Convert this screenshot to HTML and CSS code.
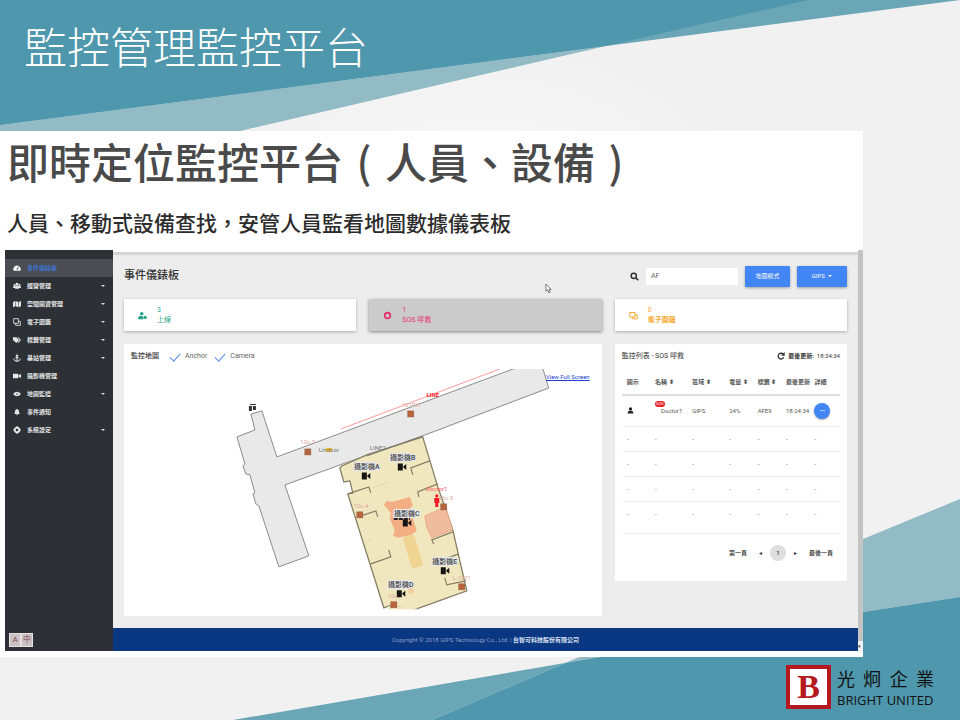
FILE: index.html
```html
<!DOCTYPE html>
<html lang="zh-Hant">
<head>
<meta charset="utf-8">
<title>監控管理監控平台</title>
<link rel="stylesheet" href="styles.css">
</head>
<body>
<svg class="backdrop" viewBox="0 0 960 720" preserveAspectRatio="none" aria-hidden="true">
  <defs>
    <radialGradient id="glow" cx="0.5" cy="0.5" r="0.5"><stop offset="0" stop-color="#fafafa"/><stop offset="1" stop-color="#f1f1f1"/></radialGradient>
  </defs>
  <rect width="960" height="720" fill="#f1f1f1"/>
  <ellipse cx="480" cy="200" rx="260" ry="160" fill="url(#glow)"/>
  <path fill="#6ba6b7" d="M0 0H960L606 46L0 125Z"/>
  <path fill="#92bbc6" d="M0 125L606 46L240 131V140H0Z"/>
  <path fill="#4e97ac" d="M0 0H808L606 46L0 125Z"/>
  <path fill="#6ba6b7" d="M233 720L565 663L432 720Z"/>
  <path fill="#92bbc6" d="M565 663L863 539L960 499V597L863 612Z"/>
  <path fill="#4e97ac" d="M432 720L565 663L863 612L960 597V720Z"/>
</svg>

<div class="slide">
  <h1 class="slide-title">監控管理監控平台</h1>

  <main class="sheet">
    <h2 class="sheet-title">即時定位監控平台<span>(</span>人員、設備<span>)</span></h2>
    <p class="sheet-sub">人員、移動式設備查找，安管人員監看地圖數據儀表板</p>

    <div class="app">
      <nav class="side">
        <ul class="menu">
          <li><a class="active" href="#"><svg viewBox="0 0 12 12"><path d="M1 10a5.500 5.500 0 1 1 10 0z"/><path d="M6 9L8 4" stroke="#4b4d52" stroke-width="1.500"/></svg>事件儀錶板</a></li>
          <li><a class="more" href="#"><svg viewBox="0 0 12 12"><circle cx="6" cy="3.500" r="2.200"/><circle cx="2.200" cy="4.500" r="1.600"/><circle cx="9.800" cy="4.500" r="1.600"/><path d="M0 9V7q3-2 6-1 3-1 6 1v2H9v1H3V9z"/></svg>經營管理</a></li>
          <li><a class="more" href="#"><svg viewBox="0 0 12 12"><path d="M0 3l3.500-1.500v8L0 11zM4.200 1.500L7.800 3v8L4.200 9.500zM8.500 3L12 1.500v8L8.500 11z"/></svg>空間圖資管理</a></li>
          <li><a class="more" href="#"><svg viewBox="0 0 12 12"><path fill="none" stroke="currentColor" stroke-width="1.300" d="M1 1h7v7H1zM4 8v3h7V5H8"/></svg>電子圍籬</a></li>
          <li><a class="more" href="#"><svg viewBox="0 0 12 12"><path d="M0 2h5l4 4-4 4.500L0 6zM6.500 2H8l4 4-4 4.500-1-1L10 6z"/></svg>標籤管理</a></li>
          <li><a class="more" href="#"><svg viewBox="0 0 12 12"><path fill="none" stroke="currentColor" stroke-width="1.500" d="M6 4v7M3.500 5.500h5M1 7q.5 4 5 4t5-4"/><circle cx="6" cy="2.500" r="1.800"/></svg>基站管理</a></li>
          <li><a href="#"><svg viewBox="0 0 12 12"><path d="M0 2.500h8v7H0zM8.500 5L12 3v6L8.500 7z"/></svg>攝影機管理</a></li>
          <li><a class="more" href="#"><svg viewBox="0 0 12 12"><path d="M0 6q6-7 12 0-6 7-12 0z"/><circle cx="6" cy="6" r="1.500" fill="#85888c"/></svg>地圖監控</a></li>
          <li><a href="#"><svg viewBox="0 0 12 12"><path d="M1.500 9q1.500-1 1.500-4 0-3 3-3.500Q9 2 9 5q0 3 1.500 4zM4.500 9.500h3q-1.500 3-3 0z"/></svg>事件通知</a></li>
          <li><a class="more" href="#"><svg viewBox="0 0 12 12"><circle cx="6" cy="6" r="3.400" fill="none" stroke="currentColor" stroke-width="2.800"/><path stroke="currentColor" stroke-width="1.500" d="M6 0v2M6 10v2M0 6h2M10 6h2"/></svg>系統設定</a></li>
        </ul>
        <div class="langs"><button type="button">A</button><button type="button">中</button></div>
      </nav>

      <div class="body">
        <div class="content">
          <header class="bar">
            <h3>事件儀錶板</h3>
            <label class="find" for="q" aria-label="AF"><svg viewBox="0 0 12 12"><circle cx="5" cy="5" r="3.500" fill="none" stroke="currentColor" stroke-width="2"/><path stroke="currentColor" stroke-width="2.200" d="M7.500 7.500l3.500 3.500"/></svg></label>
            <input id="q" class="query" type="text" value="AF">
            <button class="btn" type="button">地圖模式</button>
            <button class="btn wide" type="button">GIPS <i class="caret"></i></button>
          </header>

          <div class="grid">
            <section class="stat teal">
              <svg viewBox="0 0 12 12"><circle cx="5" cy="3.500" r="2.300"/><path d="M0 11q0-5 5-4.500l2 1.500v3z"/><circle cx="9.500" cy="8.500" r="2.200"/></svg>
              <p>3<br>上線</p>
            </section>
            <section class="stat pink">
              <svg viewBox="0 0 12 12"><circle cx="6" cy="6" r="3.700" fill="none" stroke="currentColor" stroke-width="2.400"/></svg>
              <p>1<br>SOS 呼救</p>
            </section>
            <section class="stat amber">
              <svg viewBox="0 0 12 12"><path fill="none" stroke="currentColor" stroke-width="1.300" d="M1 2h7v6H1zM5 8v2.500h6V5H8"/></svg>
              <p>0<br><b>電子圍籬</b></p>
            </section>

            <section class="card map">
              <div class="map-head">
                <span>監控地圖</span>
                <label><input type="checkbox" checked>Anchor</label>
                <label><input type="checkbox" checked>Camera</label>
              </div>
              <a class="full" href="#">View Full Screen</a>
              <svg class="plan" viewBox="124 369 478 242">
                <defs>
                  <g id="cam"><path d="M-4-3.500h5v7h-5zM1.500-.500L4.500-3v6L1.500.500z" fill="#151515"/></g>
                  <g id="anc"><rect x="-3" y="-3" width="6" height="6" fill="#b8653f" stroke="#94563c" stroke-width=".5"/></g>
                </defs>
                <path fill="#e9e9e9" stroke="#8b8b8b" d="M262 411L251 414L255 430L237 437L245 464L243 466L246 474L250 475L255 493L253 494L256 504L259 506L279 567L309 556L285 485L343 464L420 437L549 388L543 368H516L277 457Z"/>
                <path fill="none" stroke="#f99" d="M341 429L500 369"/>
                <path fill="#f1e7bf" stroke="#857e66" stroke-width="1.300" d="M423 437L367 455L342 466L340 468L344 482L350 481L353 493L348 494L384 608L389 606L417 609L467 591L453 530L438 487Z"/>
                <path stroke="#f1e7bf" stroke-width="3" d="M388 608H417"/>
                <path fill="none" stroke="#777967" d="M367 456L423 436"/>
                <path fill="none" stroke="#857e66" stroke-width="1.200" d="M348 494L369 487L371 493M361 516L376 511L378 517M371 564L391 557L389 550M430 461L411 468L413 475M438 484L418 492L419 497M453 532L432 540L434 544M459 554L448 558M466 581L447 585L445 578"/>
                <path fill="#f4ae83" d="M384 505L387 501L392 502L410 497L413 505L410 509L417 531L412 535L398 538L393 536L395 531L390 518L391 513Z"/>
                <path fill="#f0bca0" stroke="#e69a78" stroke-width=".7" d="M425 516L446 507L453 530L432 538L427 527Z"/>
                <rect x="407" y="535" width="12" height="33" rx="4" transform="rotate(-17 413 551)" fill="#f0d492"/>
                <circle cx="411" cy="591" r="3" fill="#f3d0a0"/>
                <path stroke="#e4d8aa" d="M372 488L389 482M366 541L372 539"/>
                <g class="halo">
                  <text x="367" y="469">攝影機A</text><text x="403" y="460">攝影機B</text><text x="407" y="516">攝影機C</text>
                  <text x="401" y="587">攝影機D</text><text x="445" y="564">攝影機E</text>
                </g>
                <path stroke="#222" stroke-width="2" stroke-dasharray="4 1" d="M394 519H410"/>
                <use href="#cam" x="366" y="476"/><use href="#cam" x="402" y="467"/><use href="#cam" x="407" y="523"/><use href="#cam" x="445" y="571"/><use href="#cam" x="401" y="594"/>
                <use href="#anc" x="308" y="452"/><use href="#anc" x="411" y="414"/><use href="#anc" x="360" y="515"/><use href="#anc" x="444" y="507"/><use href="#anc" x="462" y="587"/><use href="#anc" x="394" y="605"/>
                <g class="tag"><text x="308" y="444">10c-T</text><text x="411" y="407">101PH</text><text x="361" y="508">10c-4</text><text x="446" y="500">10c-5</text><text x="462" y="580">L-1001</text><text x="393" y="598">10c</text></g>
                <path fill="#f5c12e" d="M326 448h6v4h-6z"/>
                <text class="note" x="329" y="452">Lindoor</text>
                <text class="note" x="378" y="450">LINE2</text>
                <text class="red strong" x="433" y="397">LINE</text>
                <text class="red" x="437" y="491">Doctor1</text>
                <g fill="#f31b25"><circle cx="437" cy="496" r="1.600"/><path d="M434.500 498h5v5h-1v4h-3v-4h-1z"/></g>
                <path fill="#333" d="M249 406h3v5h-3zM253 406h3v4h-3zM250 404h6v1h-6z"/>
              </svg>
            </section>

            <section class="card list">
              <div class="list-head">
                <span>監控列表 - SOS 呼救</span>
                <span class="stamp"><svg viewBox="0 0 12 12"><path fill="none" stroke="currentColor" stroke-width="2" d="M9.500 3.500A4.300 4.300 0 1 0 10 8"/><path d="M11.500 0v5.500H6z"/></svg><b>最後更新:</b> 18:34:34</span>
              </div>
              <table>
                <colgroup><col class="c-sm"><col class="c-mid"><col class="c-mid"><col class="c-sm"><col class="c-sm"><col class="c-sm"><col></colgroup>
                <thead><tr><th>圖示</th><th>名稱 <i>⬍</i></th><th>區域 <i>⬍</i></th><th>電量 <i>⬍</i></th><th>標籤 <i>⬍</i></th><th>最後更新</th><th>詳細</th></tr></thead>
                <tbody>
                  <tr class="hit"><td><svg viewBox="0 0 12 12"><circle cx="6" cy="3.300" r="2.800"/><path d="M1 11q0-5 5-4.500 5-.5 5 4.500z"/></svg></td><td><span class="who">Doctor1<em>SOS</em></span></td><td>GIPS</td><td>24%</td><td>AFE9</td><td>18:24:34</td><td><button class="dots" type="button">•••</button></td></tr>
                  <tr><td>-</td><td>-</td><td>-</td><td>-</td><td>-</td><td>-</td><td>-</td></tr>
                  <tr><td>-</td><td>-</td><td>-</td><td>-</td><td>-</td><td>-</td><td>-</td></tr>
                  <tr><td>-</td><td>-</td><td>-</td><td>-</td><td>-</td><td>-</td><td>-</td></tr>
                  <tr class="last"><td>-</td><td>-</td><td>-</td><td>-</td><td>-</td><td>-</td><td>-</td></tr>
                </tbody>
              </table>
              <div class="pager"><a href="#">第一頁</a><a href="#">◂</a><a class="now" href="#">1</a><a href="#">▸</a><a href="#">最後一頁</a></div>
            </section>
          </div>
          <svg class="cursor" viewBox="0 0 8 12"><path d="M1 1v8l2-1.500L4.500 11 6 10 4.500 7H7z" fill="#fff" stroke="#666"/></svg>
        </div>
        <footer class="foot">Copyright © 2018 GIPS Technology Co., Ltd. | <b>台智可科技股份有限公司</b></footer>
      </div>
      <div class="scroll"><span>▾</span></div>
    </div>
  </main>

  <div class="brand">
    <span class="mark">B</span>
    <p><span class="zh"><span>光</span><span>炯</span><span>企</span><span>業</span></span><span class="en">BRIGHT UNITED</span></p>
  </div>
</div>
</body>
</html>
```
FILE: styles.css
```css
* { box-sizing: border-box; margin: 0; padding: 0; }
body { font-family: "Noto Sans", "Noto Sans CJK TC", sans-serif; background: #f1f1f1; color: #333; }
.backdrop { position: absolute; inset: 0; width: 100%; height: 100%; z-index: -1; }
button, input { font: inherit; border: 0; }
a { color: inherit; text-decoration: none; }
svg { fill: currentColor; }

.slide { min-height: 100vh; display: flex; flex-direction: column; overflow: hidden; }
.slide-title {
  height: 131px; padding: 14px 24px; color: #fff;
  font: 300 43px/62px "Noto Sans CJK TC", sans-serif;
}
.sheet { width: calc(100% - 97px); background: #fff; padding-bottom: 6px; }
.sheet-title { padding-left: 7px; color: #4a4a4a; font: 500 42px/60px "Noto Sans CJK TC", sans-serif; white-space: nowrap; }
.sheet-title span { display: inline-block; width: 1em; text-align: center; }
.sheet-sub { padding-left: 7px; color: #2c2c2c; font: 500 21px/32px "Noto Sans CJK TC", sans-serif; margin: 15px 0 12px; }

.app { display: flex; margin-left: 5px; font: 7px/10px Roboto, "Noto Sans CJK TC", sans-serif; }
.side { width: 108px; background: #2d3035; color: #e4e4e4; padding: 9px 0 4px; display: flex; flex-direction: column; justify-content: space-between; }
.menu { list-style: none; }
.menu a { display: flex; align-items: center; gap: 6px; height: 18px; padding: 0 8px; font-size: 6px; font-weight: 700; }
.menu svg { width: 8px; height: 8px; }
.menu .active { background: #4b4d52; color: #3f74cc; }
.menu .active svg { color: #fff; }
.more::after { content: ""; margin-left: auto; border: 2px solid transparent; border-top-color: #ddd; border-bottom: 0; }
.langs { display: flex; padding-left: 4px; }
.langs button { width: 12px; height: 14px; background: #c9c1c3; color: #8f4a54; border: 1px solid #e5e1e2; font-size: 8px; line-height: 10px; }

.body { flex: 1; display: flex; flex-direction: column; background: #ededed; border-top: 2px solid #fff; }
.content { position: relative; flex: 1; padding: 10px 11px 12px; border-top: 3px solid #d5d5d5; }
.bar { display: flex; align-items: center; height: 22px; margin-bottom: 12px; gap: 7px; }
.bar h3 { font-size: 11px; font-weight: 500; margin-right: auto; }
.find svg { display: block; width: 9px; height: 9px; }
.query { width: 92px; height: 17px; padding: 0 5px; background: #fff; color: #666; }
.btn { width: 45px; height: 21px; background: #4285f4; color: #fff; font-size: 6px; border-radius: 1px; box-shadow: 0 1px 3px #0005; }
.wide { width: 50px; }
.caret { display: inline-block; margin-left: 2px; border: 2px solid transparent; border-top-color: #fff; border-bottom: 0; vertical-align: middle; }

.grid { display: grid; grid-template-columns: repeat(3, 1fr); gap: 13px; align-items: start; }
.stat { display: flex; align-items: center; gap: 10px; height: 32px; padding: 0 14px; background: #fff; box-shadow: 0 1px 3px #0004; }
.stat svg { width: 9px; height: 9px; }
.teal { color: #1fa587; }
.pink { color: #e5336f; background: #cbcbcb; box-shadow: 0 1px 3px #0007; }
.amber { color: #f9a72b; }

.card { background: #fff; position: relative; }
.map { grid-column: span 2; padding: 7px 0 5px; }
.map-head { display: flex; align-items: center; gap: 9px; height: 10px; padding: 0 7px; margin-bottom: 8px; font-weight: 500; }
.map-head label { display: flex; align-items: center; gap: 5px; color: #666; font-weight: 400; }
.map-head label + label { margin-left: -3px; }
.map-head input { appearance: none; width: 12px; height: 10px; }
.map-head input::before { content: ""; display: block; width: 5px; height: 9px; margin-left: 4px; border: solid #5b8df0; border-width: 0 1px 1px 0; transform: rotate(42deg); }
.full { position: absolute; right: 12px; top: 28px; color: #1a3fd0; text-decoration: underline; font-size: 6px; z-index: 1; }
.plan { display: block; width: 100%; }
.plan text { text-anchor: middle; font-size: 6px; }
.halo text { font-size: 7px; font-weight: 500; fill: #444; paint-order: stroke; stroke: #e6e8ec; stroke-width: 2px; }
.plan .tag { fill: #d9a79c; }
.plan .note { fill: #777; }
.plan .red { fill: #f55; }
.plan .strong { fill: #f22; font-weight: 700; }

.list { padding: 7px 7px 20px; }
.list-head { display: flex; justify-content: space-between; align-items: center; height: 10px; margin-bottom: 8px; }
.stamp { display: flex; align-items: center; gap: 3px; font-size: 6px; }
.stamp svg { width: 8px; height: 8px; }
table { width: 100%; border-collapse: collapse; table-layout: fixed; font-size: 6px; color: #555; }
.c-mid { width: 17%; }
.c-sm { width: 13%; }
th, td { text-align: left; padding-left: 5px; white-space: nowrap; }
th { height: 26px; font-weight: 700; border-bottom: 2px solid #ddd; }
th i { font-style: normal; }
td { height: 25px; border-bottom: 1px solid #eee; }
.hit td { height: 31px; }
.last td { height: 32px; padding-bottom: 7px; }
td svg { display: block; width: 7px; height: 7px; color: #222; }
.who { position: relative; padding-left: 6px; }
.who em { position: absolute; left: 0; top: -6px; padding: 0 1px; background: #e8202a; color: #fff; border-radius: 3px; font: 4px/6px Roboto, sans-serif; }
.dots { display: block; width: 16px; height: 16px; background: #4285f4; color: #fff; border-radius: 50%; font-size: 5px; box-shadow: 0 1px 2px #0005; }
.pager { display: flex; justify-content: flex-end; align-items: center; gap: 12px; padding: 11px 7px 0 0; font-size: 6px; font-weight: 500; }
.now { width: 16px; height: 16px; margin: 0 -4px; border-radius: 50%; background: #dedede; text-align: center; line-height: 16px; }

.cursor { position: absolute; left: 58%; top: 28px; width: 7px; height: 11px; }
.foot { height: 23px; background: #0a3782; color: #8c9fc5; text-align: center; font-size: 6px; line-height: 23px; }
.foot b { color: #dde4f2; }
.scroll { width: 5px; background: #c3c3c3; display: flex; align-items: flex-end; }
.scroll span { display: block; width: 5px; height: 10px; background: #eef0f4; font-size: 5px; }

.brand { display: flex; gap: 6px; align-items: center; justify-content: flex-end; padding: 8px 26px 0 0; color: #111; }
.mark { width: 45px; height: 44px; border: 4px solid #b3191e; background: #fff; color: #b3191e; text-align: center; font: 700 34px/36px "Liberation Serif", serif; }
.brand p { width: 97px; }
.zh { display: flex; justify-content: space-between; font: 18px/26px "Noto Sans CJK TC", sans-serif; }
.en { display: block; font: 13px/18px "Open Sans", sans-serif; white-space: nowrap; }
```
